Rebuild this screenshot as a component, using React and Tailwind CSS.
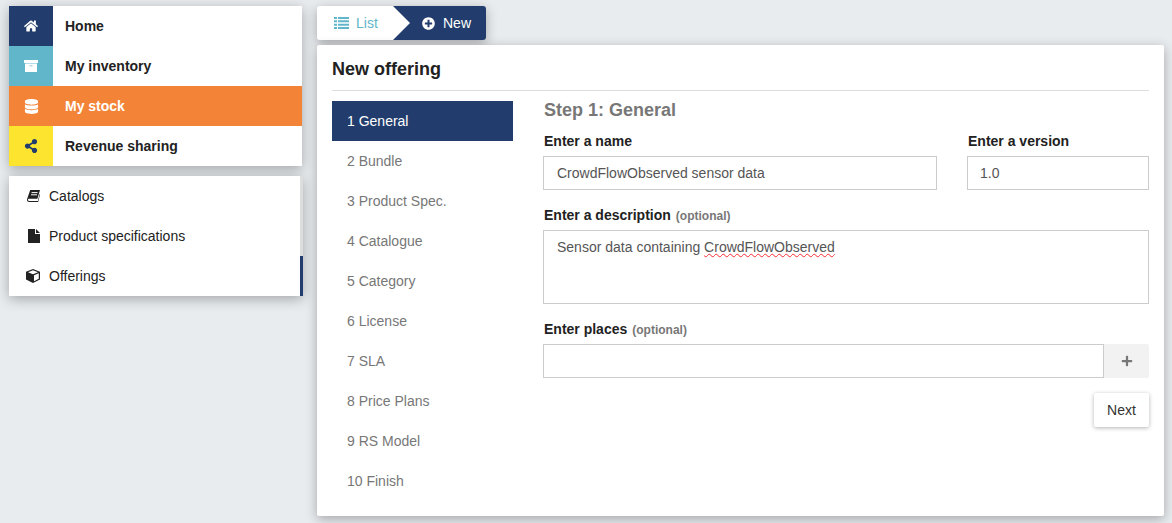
import React from "react";
import { FaHome, FaDatabase, FaShareAlt, FaPlusCircle, FaPlus } from "react-icons/fa";

const ArchiveIcon = () => (
  <svg width="14" height="12" viewBox="0 0 14 12" fill="currentColor">
    <path d="M0 0H14V3H0Z" />
    <path fillRule="evenodd" d="M1 3.4H13V12H1ZM5.5 5.4V6.2H8.5V5.4Z" />
  </svg>
);

const BookIcon = () => (
  <svg width="13" height="12" viewBox="0 0 13 12" fill="currentColor">
    <path d="M3.2 0H13L10.4 8.8H2.2C1.4 8.8 .9 9.3 1 10c.1.6.6.9 1.3.9h8.6l1.6-6.9.5.5-1.8 7.5H2.2C.9 12 0 11.2 0 10c0-.5.1-.9.3-1.4z" />
    <path d="M4.6 2.6h6M4 4.8h6" stroke="#fff" strokeWidth="1" />
  </svg>
);

const FileIcon = () => (
  <svg width="12" height="14" viewBox="0 0 12 14" fill="currentColor">
    <path d="M0 0H7V5H12V14H0Z" />
    <path d="M8 0L12 4H8Z" />
  </svg>
);

const CubeIcon = () => (
  <svg width="14" height="14" viewBox="0 0 14 14" fill="currentColor">
    <path
      fillRule="evenodd"
      d="M7 0L14 2.8V10.5L7 14L0 10.5V2.8ZM7 1.2L2 3.2L7 5.2L12 3.2ZM8 6.2V12.2L12.8 9.8V4.2Z"
    />
  </svg>
);

const ListIcon = () => (
  <svg width="15" height="12" viewBox="0 0 15 12" fill="currentColor">
    <path d="M0 0H3V2H0ZM4 0H15V2H4ZM0 3.33H3V5.33H0ZM4 3.33H15V5.33H4ZM0 6.67H3V8.67H0ZM4 6.67H15V8.67H4ZM0 10H3V12H0ZM4 10H15V12H4Z" />
  </svg>
);

const mainMenu = [
  { label: "Home", icon: <FaHome size={14} />, box: "bg-[#223d6d] text-white", row: "bg-white text-[#222]" },
  { label: "My inventory", icon: <ArchiveIcon />, box: "bg-[#62b6ca] text-white", row: "bg-white text-[#222]" },
  { label: "My stock", icon: <FaDatabase size={15} />, box: "bg-[#f38437] text-white", row: "bg-[#f38437] text-white" },
  { label: "Revenue sharing", icon: <FaShareAlt size={14} />, box: "bg-[#fde52f] text-[#223d6d]", row: "bg-white text-[#222]" },
];

const subMenu = [
  { label: "Catalogs", icon: <BookIcon /> },
  { label: "Product specifications", icon: <FileIcon /> },
  { label: "Offerings", icon: <CubeIcon /> },
];

const steps = [
  "1 General",
  "2 Bundle",
  "3 Product Spec.",
  "4 Catalogue",
  "5 Category",
  "6 License",
  "7 SLA",
  "8 Price Plans",
  "9 RS Model",
  "10 Finish",
];

const cardShadow = "shadow-[0_3px_12px_rgba(0,0,0,0.3)]";

const Label = ({ children, optional }) => (
  <div className="h-[20px] text-[14px] leading-[20px] font-bold text-[#222]">
    {children}
    {optional && <span className="ml-[5px] text-[12px] text-[#777]">(optional)</span>}
  </div>
);

const Sidebar = () => (
  <div className="flex w-[293px] shrink-0 flex-col gap-[10px]">
    <div className={`bg-white ${cardShadow}`}>
      {mainMenu.map(({ label, icon, box, row }) => (
        <div key={label} className={`flex h-[40px] items-center ${row}`}>
          <div className={`flex h-full w-[44px] items-center justify-center ${box}`}>{icon}</div>
          <span className="ml-[12px] text-[14px] font-bold">{label}</span>
        </div>
      ))}
    </div>
    <div className={`-mr-px flex bg-white ${cardShadow}`}>
      <div className="flex-1">
        {subMenu.map(({ label, icon }) => (
          <div key={label} className="flex h-[40px] items-center text-[14px] text-[#222]">
            <div className="flex w-[40px] justify-end pr-[9px]">{icon}</div>
            <span>{label}</span>
          </div>
        ))}
      </div>
      <div className="flex w-[3px] flex-col">
        <div className="flex-1 bg-[#dcdddd]" />
        <div className="h-[40px] bg-[#223d6d]" />
      </div>
    </div>
  </div>
);

const Tabs = () => (
  <div className={`flex h-[34px] w-[169px] rounded-[3px] text-[14px] ${cardShadow}`}>
    <div className="flex w-[76px] items-center gap-[7px] rounded-l-[3px] bg-white pl-[17px] text-[#62b6ca]">
      <ListIcon />
      <span>List</span>
    </div>
    <div className="relative flex flex-1 items-center gap-[8px] rounded-r-[3px] bg-[#223d6d] pl-[29px] text-white">
      <div className="absolute top-0 left-0 h-0 w-0 border-y-[17px] border-l-[17px] border-y-transparent border-l-white" />
      <FaPlusCircle size={13} />
      <span>New</span>
    </div>
  </div>
);

export default function App() {
  return (
    <div className="flex h-[523px] w-[1172px] gap-[15px] overflow-hidden bg-[#e9ecef] pt-[6px] pl-[9px] font-['Liberation_Sans',Arial,sans-serif]">
      <Sidebar />
      <div className="flex w-[847px] flex-col gap-[5px]">
        <Tabs />
        <div className={`h-[471px] rounded-[2px] bg-white px-[15px] ${cardShadow}`}>
          <h1 className="flex h-[46px] items-end border-b border-[#ddd] pb-[11px] text-[18px] leading-[20px] font-bold text-[#222]">
            New offering
          </h1>
          <div className="mt-[10px] flex">
            <div className="w-[181px] shrink-0">
              {steps.map((s, i) => (
                <div
                  key={s}
                  className={`flex h-[40px] items-center pl-[15px] text-[14px] ${
                    i === 0 ? "bg-[#223d6d] text-white" : "text-[#777]"
                  }`}
                >
                  {s}
                </div>
              ))}
            </div>
            <div className="ml-[31px] flex-1">
              <h2 className="h-[30px] text-[18px] leading-[18px] font-bold text-[#777]">Step 1: General</h2>
              <div className="flex gap-[30px]">
                <div className="w-[393px]">
                  <Label>Enter a name</Label>
                  <input
                    readOnly
                    value="CrowdFlowObserved sensor data"
                    className="mt-[5px] -ml-px h-[34px] w-[394px] border border-[#ccc] pr-[12px] pl-[13px] text-[14px] text-[#555] outline-none"
                  />
                </div>
                <div className="flex-1">
                  <div className="pl-px">
                    <Label>Enter a version</Label>
                  </div>
                  <input
                    readOnly
                    value="1.0"
                    className="mt-[5px] h-[34px] w-full border border-[#ccc] px-[12px] text-[14px] text-[#555] outline-none"
                  />
                </div>
              </div>
              <div className="mt-[15px]">
                <Label optional>Enter a description</Label>
                <div className="mt-[5px] -ml-px h-[74px] border border-[#ccc] py-[6px] pr-[12px] pl-[13px] text-[14px] leading-[20px] text-[#555]">
                  Sensor data containing{" "}
                  <span className="underline decoration-red-500 decoration-wavy decoration-1">CrowdFlowObserved</span>
                </div>
              </div>
              <div className="mt-[15px]">
                <Label optional>Enter places</Label>
                <div className="mt-[5px] -ml-px flex h-[34px]">
                  <input readOnly className="h-full min-w-0 flex-1 border border-[#ccc] outline-none" />
                  <div className="flex w-[45px] items-center justify-center rounded-r-[2px] bg-[#f2f2f2] text-[#777]">
                    <FaPlus size={12} />
                  </div>
                </div>
              </div>
              <div className="mt-[15px] flex justify-end">
                <div className="flex h-[34px] w-[55px] items-center justify-center rounded-[2px] bg-white text-[14px] text-[#333] shadow-[0_1px_4px_rgba(0,0,0,0.3)]">
                  Next
                </div>
              </div>
            </div>
          </div>
        </div>
      </div>
    </div>
  );
}
